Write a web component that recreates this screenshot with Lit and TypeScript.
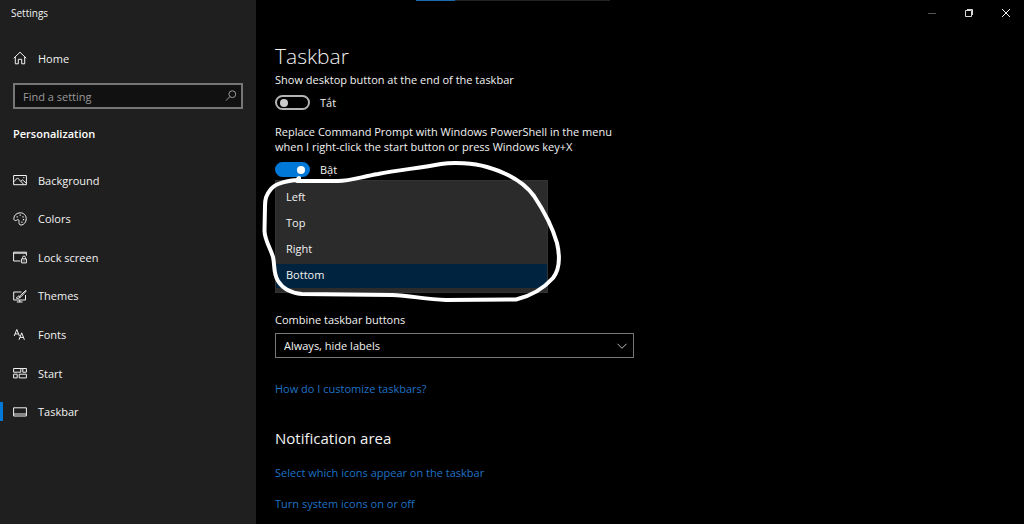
import { LitElement, html, css, svg } from "lit";
import { customElement, property, state } from "lit/decorators.js";
import { classMap } from "lit/directives/class-map.js";

const icons: Record<string, unknown> = {
  home: svg`<path d="M.8 7.2 7 1.2l6.200 6M2.300 6v6.800h3V8.300h3.400v4.500h3V6" />`,
  background: svg`<path d="M.6 2.500h12.800v9.200H.6zM.8 8.800l3.700-3.900 6.300 6.600M7.800 8.300l1.700-1.500 3.700 3.400" /><path d="M10.300 4.600h1" />`,
  colors: svg`<path d="M.8 6.500C1 3.200 3.700.8 7.200.8c3.600 0 6 2.600 6 5.900 0 3.500-2.500 6.300-5.200 6.300-1.500 0-2-.9-2-2.200 0-1.600.2-3.100-.9-3.200-1-.1-1.600 1.200-2.700 1C1.300 8.400.8 7.700.8 6.500z" /><path d="M3.600 4.800h1.200M6.600 3.200h1.200M9.400 4.900h1.200M9.900 7.700h1.200M8.300 10.200h1.200" stroke-width="1.300" />`,
  lock: svg`<path d="M7.500 11H.6V2.200h12.800v3.500M.6 3.200h12.800M8.600 8.900h4.800v4H8.600zM9.600 8.900V7.300c0-1.700 2.800-1.700 2.800 0v1.600M10.500 10.900h1" />`,
  themes: svg`<path d="M8.500 3H.7v8h11.800V6M3.800 13h5.800M6.700 11v2M12.800 1.400 7.300 6.500 6.100 8.600l2.100-1L13.300 2zM6.200 6.800C4.600 6.700 4.700 8.700 3.300 9c1.300.8 3.300.5 3.700-.8" />`,
  fonts: svg`<path d="M1.200 8 3.800 1.500 6.400 8M2 5.900h3.600M6 11.800l2.700-7 2.700 7M7 9.400h3.500" />`,
  start: svg`<path d="M.6 2.500h7.200v3.700H.6zM9.800 2.500h3.600v3.700H9.800zM.6 8.200h3.600v3.700H.6zM6.200 8.200h7.200v3.700H6.200zM7.800 2.500h2" />`,
  taskbar: svg`<path d="M.6 2.800h12.800v8.200H.6zM.6 9h12.800" />`,
  search: svg`<circle cx="8.300" cy="5.200" r="3.400" /><path d="M5.800 7.700 2 11.600" />`,
  chevron: svg`<path d="M2.500 4.800 7 9.300l4.500-4.500" />`,
  minimize: svg`<path d="M3 7.500h8" stroke="#555" />`,
  restore: svg`<path d="M3.500 4.500h6v6h-6zM5 3.500h5.500V9" stroke-width=".9" />`,
  close: svg`<path d="M3 3l8 8M11 3l-8 8" />`,
};

@customElement("line-icon")
class LineIcon extends LitElement {
  @property() name = "";

  static styles = css`
    :host { display: block; flex: none; width: 14px; height: 14px; }
    .glyph { display: block; width: 100%; height: 100%; fill: none; stroke: currentColor; stroke-width: 1; }
  `;

  render() {
    return html`<svg class="glyph" viewBox="0 0 14 14" aria-hidden="true">${icons[this.name]}</svg>`;
  }
}

@customElement("toggle-switch")
class ToggleSwitch extends LitElement {
  @property() caption = "";
  @property({ type: Boolean }) on = false;

  static styles = css`
    :host { display: block; }
    .caption { display: block; line-height: 15px; }
    .row { display: flex; align-items: center; gap: 10px; height: 15px; margin-top: 8px; }
    .switch {
      appearance: none; box-sizing: border-box; display: flex; align-items: center;
      width: 35px; height: 15px; margin: 0; padding: 0 3px;
      border: 2px solid #b4b4b4; border-radius: 8px; background: #000;
    }
    .switch::before { content: ""; width: 8px; height: 8px; border-radius: 50%; background: #ccc; }
    .switch:checked { justify-content: flex-end; border-color: #0078d7; background: #0078d7; }
    .switch:checked::before { background: #fff; }
  `;

  render() {
    return html`
      <label class="caption" for="switch">${this.caption}</label>
      <div class="row">
        <input id="switch" class="switch" type="checkbox" role="switch" .checked=${this.on}
          @change=${(e: Event) => (this.on = (e.target as HTMLInputElement).checked)} />
        <span>${this.on ? "Bật" : "Tắt"}</span>
      </div>
    `;
  }
}

const sections = [
  ["background", "Background"],
  ["colors", "Colors"],
  ["lock", "Lock screen"],
  ["themes", "Themes"],
  ["fonts", "Fonts"],
  ["start", "Start"],
  ["taskbar", "Taskbar"],
];

@customElement("app-root")
class AppRoot extends LitElement {
  @state() private position = "Bottom";

  static styles = css`
    :host {
      display: grid; grid-template-columns: 256px minmax(0, 1fr); min-height: 100vh;
      background: #000; color: #f2f2f2;
      font: 11px/15px "Open Sans", "Noto Sans", sans-serif;
    }
    button, input, select { font: inherit; color: inherit; border-radius: 0; }
    a { color: inherit; text-decoration: none; }
    h1, h2, p, ul { margin: 0; padding: 0; font-weight: 400; }

    .side { background: #1f1f1f; }
    .title { padding: 5px 11px 0; font-size: 10px; line-height: 16px; }
    .item { display: flex; align-items: center; gap: 11px; padding: 0 13px; }
    .home { height: 38px; margin-top: 18px; }
    .search {
      display: flex; align-items: center; box-sizing: border-box; height: 26px;
      margin: 6px 13px 0; padding: 0 3px 0 8px;
      border: 2px solid #767676; background: #111; color: #999;
    }
    .field { flex: 1; min-width: 0; padding: 0; border: 0; outline: 0; background: none; }
    .field::placeholder { color: #999; opacity: 1; }
    .group { margin: 17px 13px 0; font-size: 11px; font-weight: 600; line-height: 16px; color: #fff; }
    .nav { display: grid; grid-auto-rows: 1fr; height: 270px; margin-top: 19px; }
    .current { background: linear-gradient(#0078d7, #0078d7) left center / 3px 19px no-repeat; }

    .bar { display: flex; align-items: flex-start; height: 26px; }
    .progress { width: 194px; height: 1px; margin-left: 160px; background: linear-gradient(90deg, #1c69b0 20%, #222 20%); }
    .controls { display: flex; margin-left: auto; }
    .control { display: grid; place-items: center start; box-sizing: border-box; width: 37px; height: 26px; padding: 0 0 0 12px; border: 0; background: none; }
    .content { max-width: 359px; padding: 15px 19px 12px; }
    .heading { margin-bottom: 1px; font-size: 21px; font-weight: 300; line-height: 30px; }
    .second { margin-top: 14px; }
    .location { position: relative; width: 273px; margin-top: 3px; }
    .menu {
      display: grid; gap: 2px; box-sizing: border-box; padding: 5px 0 4px;
      border: 1px solid #333; background: #2b2b2b; list-style: none;
    }
    .option { display: block; width: 100%; height: 24px; padding: 0 10px 3px; border: 0; background: none; text-align: left; }
    .chosen { background: #00243f; }
    .loop { position: absolute; left: -15px; top: -20px; width: 305px; height: 145px; fill: none; stroke: #fff; stroke-width: 4; stroke-linecap: round; stroke-linejoin: round; pointer-events: none; }
    .caption { display: block; margin-top: 19px; }
    .picker { display: grid; align-items: center; margin-top: 6px; }
    .picker > * { grid-area: 1 / 1; }
    .select { appearance: none; width: 100%; height: 25px; padding: 0 8px; border: 1px solid #777; background: #000; }
    .chevron { justify-self: end; margin-right: 5px; pointer-events: none; color: #bbb; }
    .link { display: block; width: fit-content; margin-top: 16px; color: #1f72c4; }
    .help { margin-top: 23px; }
    .subheading { margin-top: 31px; font-size: 15px; line-height: 22px; }
  `;

  render() {
    return html`
      <aside class="side">
        <p class="title">Settings</p>
        <a class="item home" href="#home"><line-icon name="home"></line-icon>Home</a>
        <div class="search">
          <input class="field" type="text" placeholder="Find a setting" aria-label="Find a setting" />
          <line-icon name="search"></line-icon>
        </div>
        <h2 class="group">Personalization</h2>
        <nav class="nav">
          ${sections.map(([icon, label]) => html`
            <a class=${classMap({ item: true, current: label === "Taskbar" })} href="#${icon}">
              <line-icon name=${icon}></line-icon>${label}
            </a>`)}
        </nav>
      </aside>
      <main>
        <div class="bar">
          <div class="progress"></div>
          <div class="controls">
            ${["minimize", "restore", "close"].map((name) => html`
              <button class="control" aria-label=${name}><line-icon name=${name}></line-icon></button>`)}
          </div>
        </div>
        <div class="content">
          <h1 class="heading">Taskbar</h1>
          <toggle-switch caption="Show desktop button at the end of the taskbar"></toggle-switch>
          <toggle-switch class="second" on
            caption="Replace Command Prompt with Windows PowerShell in the menu when I right-click the start button or press Windows key+X"></toggle-switch>
          <div class="location">
            <ul class="menu" role="listbox" aria-label="Taskbar location on screen">
              ${["Left", "Top", "Right", "Bottom"].map((side) => html`
                <li role="presentation">
                  <button role="option" aria-selected=${side === this.position}
                    class=${classMap({ option: true, chosen: side === this.position })}
                    @click=${() => (this.position = side)}>${side}</button>
                </li>`)}
            </ul>
            <svg class="loop" viewBox="260 160 305 145" aria-hidden="true">
              <path d="M299 178 297 180C286 181 275 184 271 189 266 195 265 199 265 206L264.500 231C265 241 270 247 273 257 275 265 273 273 278 281 283 289 290 293 302 294L392 295C412 296 424 299 446 300L516 299.500C531 296 544 288 553 278 560 269 560 256 557 243 553 229 544 211 534 196 524 182 508 173 487 167 473 163 454 162 441 164 420 168 398 170 378 174 361 177 350 181 338 181H297" />
            </svg>
          </div>
          <label class="caption" for="combine">Combine taskbar buttons</label>
          <div class="picker">
            <select id="combine" class="select"><option>Always, hide labels</option></select>
            <line-icon class="chevron" name="chevron"></line-icon>
          </div>
          <a class="link help" href="#customize">How do I customize taskbars?</a>
          <h2 class="subheading">Notification area</h2>
          <a class="link" href="#icons">Select which icons appear on the taskbar</a>
          <a class="link" href="#system">Turn system icons on or off</a>
        </div>
      </main>
    `;
  }
}
